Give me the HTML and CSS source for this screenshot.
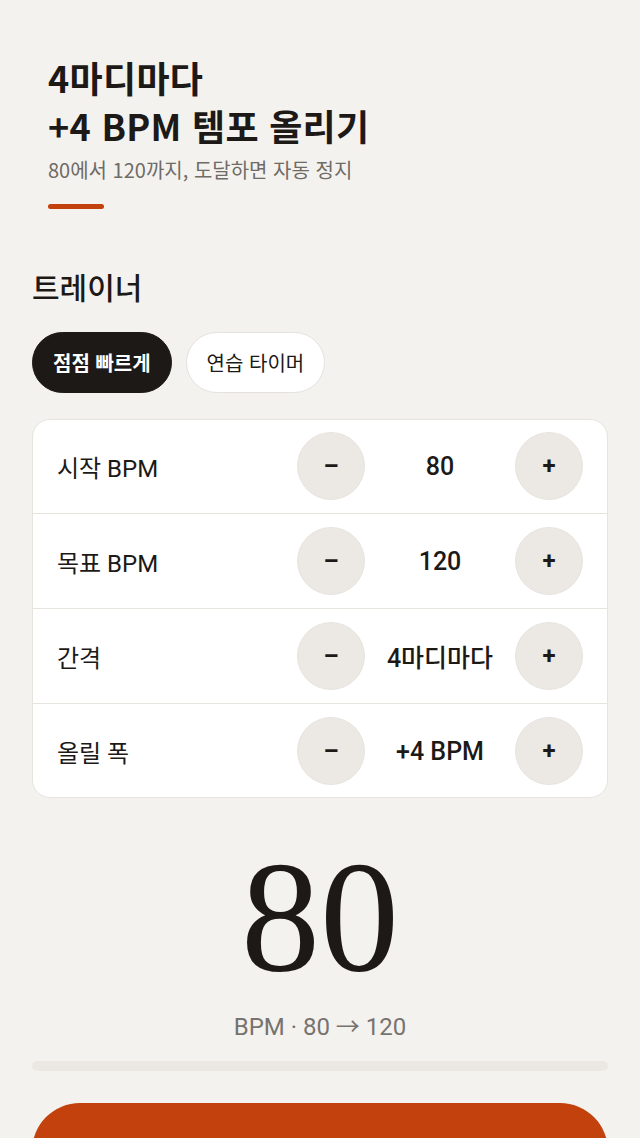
FILE: index.html
```html
<!DOCTYPE html>
<html lang="ko">
<head>
    <meta charset="UTF-8">
    <meta name="viewport" content="width=device-width, initial-scale=1.0">
    <title>템포 트레이너</title>
    <link rel="stylesheet" href="styles.css">
</head>
<body>

<div class="page">
    <header class="hero">
        <h1>4마디마다<br>+4 BPM 템포 올리기</h1>
        <p class="hero-sub">80에서 120까지, 도달하면 자동 정지</p>
        <div class="accent"></div>
    </header>

    <h2 class="section-title">트레이너</h2>

    <div class="chips">
        <button class="chip active">점점 빠르게</button>
        <button class="chip">연습 타이머</button>
    </div>

    <div class="card">
        <div class="row">
            <span class="label">시작 BPM</span>
            <div class="stepper">
                <button class="round">–</button>
                <span class="value">80</span>
                <button class="round">+</button>
            </div>
        </div>
        <div class="row">
            <span class="label">목표 BPM</span>
            <div class="stepper">
                <button class="round">–</button>
                <span class="value">120</span>
                <button class="round">+</button>
            </div>
        </div>
        <div class="row">
            <span class="label">간격</span>
            <div class="stepper">
                <button class="round">–</button>
                <span class="value">4마디마다</span>
                <button class="round">+</button>
            </div>
        </div>
        <div class="row">
            <span class="label">올릴 폭</span>
            <div class="stepper">
                <button class="round">–</button>
                <span class="value">+4 BPM</span>
                <button class="round">+</button>
            </div>
        </div>
    </div>

    <div class="tempo">80</div>
    <div class="tempo-meta">BPM · 80 → 120</div>

    <div class="progress"><div class="progress-fill"></div></div>

    <button class="start">시작</button>
</div>

</body>
</html>
```

FILE: styles.css
```css
body {
    margin: 0;
    background: #f4f2ee;
    color: #1c1917;
    font-family: Roboto, "Noto Sans CJK KR", sans-serif;
}
.page {
    padding: 0 32px;
}
.hero {
    padding: 53px 16px 0;
    font-family: "Noto Sans CJK KR", sans-serif;
}
.hero h1 {
    margin: 0;
    font-size: 36px;
    line-height: 48px;
    font-weight: 700;
    letter-spacing: 0.3px;
}
.hero-sub {
    margin: 7px 0 0;
    font-size: 20px;
    line-height: 28px;
    color: #6f6b66;
}
.accent {
    width: 56px;
    height: 5px;
    margin-top: 20px;
    border-radius: 3px;
    background: #c2410c;
}
.section-title {
    margin: 57px 0 0;
    font-family: "Noto Sans CJK KR", sans-serif;
    font-size: 30px;
    line-height: 40px;
    font-weight: 500;
}
.chips {
    display: flex;
    gap: 14px;
    margin-top: 26px;
}
.chip {
    height: 61px;
    padding: 0 20px;
    border-radius: 31px;
    border: 1px solid #e5e2dd;
    background: #fff;
    color: #1c1917;
    font-family: "Noto Sans CJK KR", sans-serif;
    font-size: 20px;
    font-weight: 400;
}
.chip.active {
    background: #1c1917;
    border-color: #1c1917;
    color: #fff;
    font-weight: 700;
}
.card {
    margin-top: 26px;
    background: #fff;
    border: 1px solid #e7e4df;
    border-radius: 18px;
}
.row {
    display: flex;
    align-items: center;
    justify-content: space-between;
    padding: 13px 24px;
    border-bottom: 1px solid #e7e4df;
}
.row:first-child {
    padding-top: 12px;
}
.row:last-child {
    border-bottom: none;
    padding-bottom: 12px;
}
.label {
    font-size: 24px;
}
.stepper {
    display: flex;
    align-items: center;
}
.round {
    width: 68px;
    height: 68px;
    border-radius: 50%;
    border: 1px solid #e8e5e0;
    background: #ece9e5;
    color: #1c1917;
    font-family: Roboto, sans-serif;
    font-size: 24px;
    font-weight: 700;
    padding: 0;
}
.value {
    width: 150px;
    text-align: center;
    font-size: 25px;
    font-weight: 500;
}
.tempo {
    margin-top: 40px;
    text-align: center;
    font-family: "Liberation Serif", serif;
    font-size: 158px;
    line-height: 1;
}
.tempo-meta {
    margin-top: 15px;
    text-align: center;
    font-size: 24px;
    line-height: 32px;
    color: #77736e;
}
.progress {
    margin-top: 18px;
    height: 10px;
    border-radius: 5px;
    background: #ebe8e3;
}
.progress-fill {
    width: 0;
    height: 100%;
}
.start {
    display: block;
    width: 100%;
    height: 96px;
    margin: 32px 0 40px;
    border: none;
    border-radius: 48px;
    background: #c2410c;
    color: #fff;
    font-family: "Noto Sans CJK KR", sans-serif;
    font-size: 26px;
    font-weight: 700;
}
```
